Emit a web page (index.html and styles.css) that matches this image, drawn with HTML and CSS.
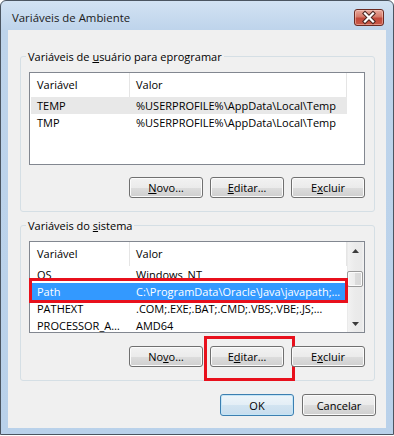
FILE: index.html
```html
<!DOCTYPE html>
<html lang="pt">
<head>
<meta charset="utf-8">
<title>Variáveis de Ambiente</title>
<link rel="stylesheet" href="styles.css">
</head>
<body>
<div class="window">
  <div class="titlebar">
    <span class="title">Variáveis de Ambiente</span>
    <button class="close" aria-label="Fechar">
      <svg width="30" height="17" viewBox="0 0 30 17">
        <path d="M11 4.5 L19 12.5 M19 4.5 L11 12.5" stroke="#4a2520" stroke-width="4.2" stroke-linecap="square" fill="none"/>
        <path d="M11 4.5 L19 12.5 M19 4.5 L11 12.5" stroke="#ffffff" stroke-width="2.2" stroke-linecap="square" fill="none"/>
      </svg>
    </button>
  </div>
  <div class="client">
    <fieldset class="group group-user">
      <legend>Variáveis de <u>u</u>suário para eprogramar</legend>
      <div class="listbox">
        <div class="lv">
          <div class="lv-header">
            <span class="hcol c1">Variável</span>
            <span class="hcol c2">Valor</span>
            <span class="hfill"></span>
          </div>
          <div class="row hot"><span class="c1">TEMP</span><span class="c2">%USERPROFILE%\AppData\Local\Temp</span></div>
          <div class="row"><span class="c1">TMP</span><span class="c2">%USERPROFILE%\AppData\Local\Temp</span></div>
        </div>
      </div>
      <div class="buttons">
        <button class="btn"><u>N</u>ovo…</button>
        <button class="btn"><u>E</u>ditar…</button>
        <button class="btn">E<u>x</u>cluir</button>
      </div>
    </fieldset>

    <fieldset class="group group-sys">
      <legend>Variáveis do <u>s</u>istema</legend>
      <div class="listbox listbox-sys">
        <div class="lv">
          <div class="lv-header">
            <span class="hcol c1">Variável</span>
            <span class="hcol c2">Valor</span>
          </div>
          <div class="row"><span class="c1">OS</span><span class="c2">Windows_NT</span></div>
          <div class="row selected"><span class="c1">Path</span><span class="c2">C:\ProgramData\Oracle\Java\javapath;…</span></div>
          <div class="row"><span class="c1">PATHEXT</span><span class="c2">.COM;.EXE;.BAT;.CMD;.VBS;.VBE;.JS;…</span></div>
          <div class="row"><span class="c1">PROCESSOR_A…</span><span class="c2">AMD64</span></div>
        </div>
        <div class="scrollbar">
          <div class="sb-arrow">
            <svg width="7" height="4" viewBox="0 0 7 4"><path d="M0 4 L3.5 0 L7 4 Z" fill="#3b3b3b"/></svg>
          </div>
          <div class="sb-track"><div class="sb-thumb"></div></div>
          <div class="sb-arrow">
            <svg width="7" height="4" viewBox="0 0 7 4"><path d="M0 0 L7 0 L3.5 4 Z" fill="#3b3b3b"/></svg>
          </div>
        </div>
        <span class="mark mark-row"></span>
      </div>
      <div class="buttons">
        <button class="btn">No<u>v</u>o…</button>
        <button class="btn marked">E<u>d</u>itar…</button>
        <button class="btn">E<u>x</u>cluir</button>
      </div>
    </fieldset>

    <div class="dialog-buttons">
      <button class="btn btn-default">OK</button>
      <button class="btn">Cancelar</button>
    </div>
  </div>
</div>
</body>
</html>
```

FILE: styles.css
```css
* {
  box-sizing: border-box;
}

html,
body {
  margin: 0;
  padding: 0;
  background: #ffffff;
}

body {
  font-family: "Open Sans", "Noto Sans", sans-serif;
  font-size: 11px;
  color: #000000;
}

u {
  text-decoration: underline;
  text-underline-offset: 1px;
}

.window {
  width: 394px;
  height: 435px;
  border: 1px solid #4b5561;
  border-radius: 6px 6px 0 0;
  background: linear-gradient(#d2e2f3 0, #bed4eb 29px, #b9d1ea 100%);
  box-shadow: 0 1px 0 #33d6ea;
  padding: 0 7px 6px 7px;
  display: flex;
  flex-direction: column;
}

.titlebar {
  height: 29px;
  flex: none;
  display: flex;
  justify-content: space-between;
  align-items: flex-start;
  margin: 0 -7px;
  padding: 0 9px 0 11px;
}

.title {
  font-size: 11.4px;
  line-height: 16px;
  padding-top: 9px;
  color: #1a1a1a;
}

.close {
  width: 30px;
  height: 17px;
  margin-top: 8px;
  padding: 0;
  border: 1px solid #6b2a22;
  border-radius: 3px;
  background: linear-gradient(#e9a99c 0%, #d57a6a 45%, #c2483a 55%, #c95a48 100%);
  box-shadow: inset 0 0 0 1px rgba(255, 220, 210, 0.45);
  display: flex;
  align-items: center;
  justify-content: center;
}

.close svg {
  display: block;
  margin: -1px;
}

.client {
  flex: 1;
  background: #f0f0f0;
  padding: 0 11px 0 12px;
  display: flex;
  flex-direction: column;
}

.group {
  margin: 0;
  border: 1px solid #d5dfe5;
  border-radius: 3px;
  padding: 8px 9px 13px 8px;
  min-width: 0;
}

.group-user {
  margin-top: 19px;
}

.group-sys {
  margin-top: 6px;
}

.group legend {
  font-size: 11px;
  line-height: 15px;
  padding: 0 2px;
  margin-left: -3px;
  color: #000000;
}

.listbox {
  position: relative;
  height: 93px;
  border: 1px solid #828790;
  background: #ffffff;
  display: flex;
}

.listbox-sys {
  height: 92px;
}

.lv {
  flex: 1;
  overflow: hidden;
  min-width: 0;
}

.lv-header {
  height: 24px;
  display: flex;
  background: #ffffff;
}

.hcol {
  line-height: 24px;
  border-right: 1px solid #e5e5e5;
  white-space: nowrap;
}

.hcol.c1 {
  width: 100px;
  padding-left: 7px;
}

.hcol.c2 {
  width: 217px;
  padding-left: 6px;
}

.hfill {
  flex: 1;
}

.row {
  height: 17px;
  line-height: 17px;
  width: 316px;
  margin-left: 1px;
  display: flex;
  white-space: nowrap;
}

.row .c1 {
  width: 99px;
  padding-left: 6px;
  overflow: hidden;
}

.row .c2 {
  flex: 1;
  padding-left: 6px;
  overflow: hidden;
}

.row.hot {
  background: #e8e8e8;
}

.row.selected {
  background: #3399ff;
  color: #ffffff;
}

.scrollbar {
  width: 17px;
  flex: none;
  display: flex;
  flex-direction: column;
  background: linear-gradient(to right, #e2e2e2 0, #f2f2f2 1px, #ebebeb 8px, #e9e9e9 15px, #f2f2f2 16px);
}

.sb-arrow {
  height: 17px;
  display: flex;
  align-items: center;
  justify-content: center;
}

.sb-track {
  flex: 1;
}

.sb-thumb {
  margin: 12px 1px 0 0;
  height: 16px;
  border: 1px solid #9a9a9a;
  border-radius: 2px;
  background: linear-gradient(to right, #f4f4f4 0%, #ececec 50%, #dcdcdc 51%, #d8d8d8 100%);
  box-shadow: inset 0 0 0 1px #fbfbfb;
}

.mark {
  position: absolute;
  border: 3px solid #e8101c;
  pointer-events: none;
}

.mark-row {
  top: 36px;
  left: -1px;
  width: 319px;
  height: 25px;
}

.buttons {
  display: flex;
  justify-content: flex-end;
  gap: 7px;
  margin-top: 12px;
}

.group-sys .buttons {
  margin-top: 13px;
}

.btn {
  position: relative;
  width: 74px;
  height: 21px;
  padding: 0;
  font-family: inherit;
  font-size: 11px;
  color: #000000;
  border: 1px solid #707070;
  border-radius: 3px;
  background: linear-gradient(#f2f2f2 0%, #ebebeb 50%, #dddddd 50%, #cfcfcf 100%);
  box-shadow: inset 0 0 0 1px #fbfbfb;
  line-height: 17px;
}

.btn.marked::after {
  content: "";
  position: absolute;
  left: -7px;
  top: -11px;
  width: 85px;
  height: 39px;
  border: 3px solid #e8101c;
}

.dialog-buttons {
  display: flex;
  justify-content: flex-end;
  gap: 8px;
  margin-top: 13px;
  margin-right: -1px;
}

.dialog-buttons .btn {
  height: 22px;
}

.btn-default {
  border-color: #3c7fb1;
  background: linear-gradient(#eef5fa 0%, #e3eef6 50%, #d2e4f1 50%, #c8ddee 100%);
  box-shadow: inset 0 0 0 1px #c4e5f6;
}
```
